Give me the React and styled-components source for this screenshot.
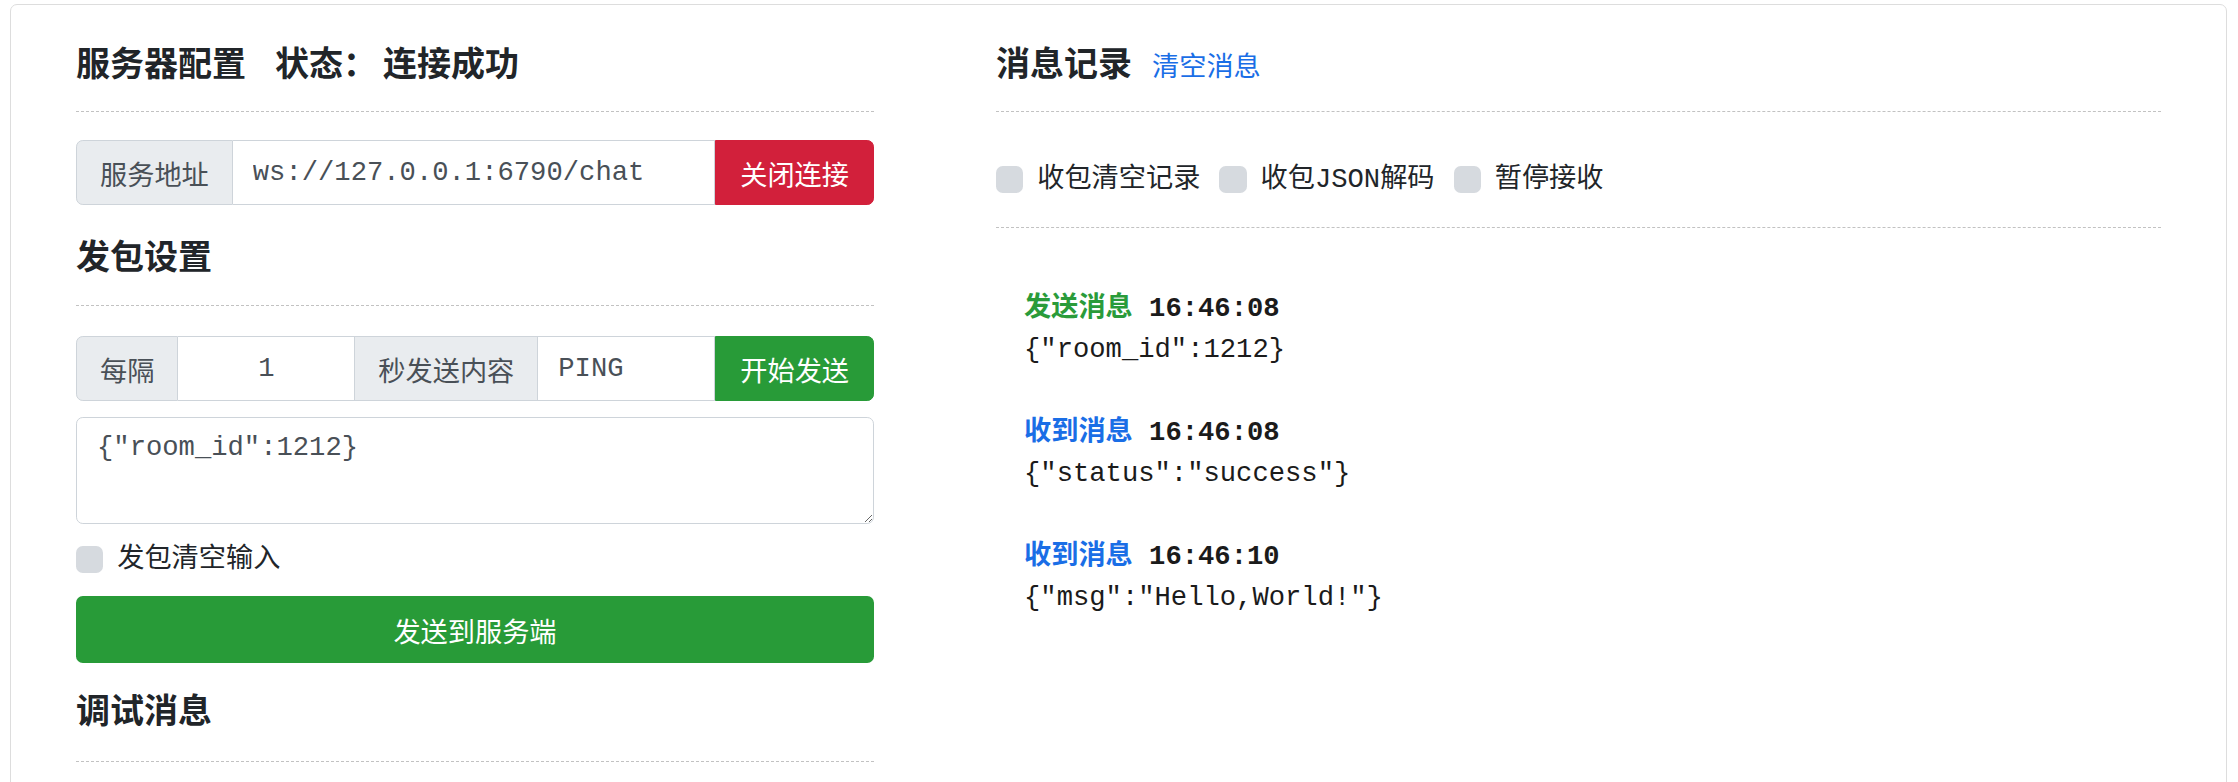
import React from "react";
import styled, { createGlobalStyle } from "styled-components";

const GlobalStyle = createGlobalStyle`
  html, body {
    margin: 0;
    padding: 0;
    background: #fff;
    overflow: hidden;
  }
  body {
    font-family: "Liberation Mono", "Noto Sans CJK SC", monospace;
    color: #212529;
  }
`;

const Card = styled.div`
  margin: 4px 11px 0 10px;
  min-height: 860px;
  border: 1.7px solid #dddddd;
  border-radius: 7px;
  padding: 36px 63px 0 65px;
  box-sizing: border-box;
`;

const Columns = styled.div`
  display: grid;
  grid-template-columns: 798px 1165px;
  column-gap: 122px;
  align-items: start;
`;

const Column = styled.div`
  display: flex;
  flex-direction: column;
`;

const Title = styled.h5`
  display: flex;
  align-items: baseline;
  height: 41px;
  margin: ${(p) => (p.$first ? "0" : `${p.$top || 29}px 0 0`)};
  font-family: "Noto Sans CJK SC", sans-serif;
  font-size: 34px;
  line-height: 41px;
  font-weight: 700;
  color: #212529;
  white-space: pre;
`;

const Status = styled.span`
  margin-left: 29px;
`;

const StatusValue = styled.span`
  margin-left: 6px;
`;

const TitleLink = styled.a`
  margin-left: 20px;
  font-size: 27.2px;
  font-weight: 400;
  color: #1a6ee6;
  text-decoration: none;
  cursor: pointer;
`;

const Divider = styled.hr`
  margin: ${(p) => p.$top || 29}px 0 0;
  border: 0;
  border-top: 1.7px dashed #c2c2c2;
`;

const InputGroup = styled.div`
  display: flex;
  height: 65px;
  margin-top: ${(p) => p.$top || 0}px;
`;

const Addon = styled.span`
  display: flex;
  align-items: center;
  padding: 0 23px;
  background: #e9ecef;
  border: 1.7px solid #ced4da;
  border-left-width: ${(p) => (p.$first ? "1.7px" : "0")};
  border-radius: ${(p) => (p.$first ? "6.8px 0 0 6.8px" : "0")};
  font-family: "Noto Sans CJK SC", sans-serif;
  font-size: 27.2px;
  color: #495057;
  white-space: nowrap;
`;

const Field = styled.input`
  flex: 1;
  min-width: 0;
  padding: 0 20px;
  border: 1.7px solid #ced4da;
  border-left-width: 0;
  font-family: "Liberation Mono", monospace;
  font-size: 27.2px;
  color: #495057;
  text-align: ${(p) => (p.$center ? "center" : "left")};
  outline: none;
  background: #fff;
`;

const GroupButton = styled.button`
  padding: 0 24px;
  border: 1.7px solid ${(p) => p.$color};
  background: ${(p) => p.$color};
  color: #fff;
  border-radius: 0 6.8px 6.8px 0;
  font-family: "Noto Sans CJK SC", sans-serif;
  font-size: 27.2px;
  white-space: nowrap;
  cursor: pointer;
`;

const TextArea = styled.textarea`
  margin-top: 16px;
  height: 107px;
  box-sizing: border-box;
  padding: 10px 20px;
  border: 1.7px solid #ced4da;
  border-radius: 6.8px;
  font-family: "Liberation Mono", monospace;
  font-size: 27.2px;
  line-height: 40.8px;
  color: #495057;
  outline: none;
  resize: vertical;
`;

const CheckRow = styled.div`
  display: flex;
  align-items: center;
  height: 41px;
  margin-top: ${(p) => p.$top || 0}px;
`;

const CheckLabel = styled.label`
  display: flex;
  align-items: center;
  gap: 14px;
  margin-right: 19px;
  font-size: 27.2px;
  line-height: 41px;
  color: #212529;
  cursor: pointer;
`;

const Box = styled.input.attrs({ type: "checkbox" })`
  appearance: none;
  margin: 0;
  width: 27.2px;
  height: 27.2px;
  border-radius: 6.8px;
  background: #d6dadf;
`;

const BlockButton = styled.button`
  margin-top: 16px;
  height: 67px;
  border: 0;
  border-radius: 6.8px;
  background: #289b38;
  color: #fff;
  font-family: "Noto Sans CJK SC", sans-serif;
  font-size: 27.2px;
  cursor: pointer;
`;

const MessageList = styled.div`
  display: flex;
  flex-direction: column;
  gap: 38px;
  margin-top: 56px;
  padding-left: 28px;
`;

const Message = styled.div`
  font-size: 27.2px;
  line-height: 41px;
  color: #1b1b1b;
`;

const Line = styled.div`
  height: 41px;
  margin-top: ${(p) => (p.$bold ? 0 : 4)}px;
  white-space: pre;
  font-weight: ${(p) => (p.$bold ? 700 : 400)};
`;

const Kind = styled.span`
  font-family: "Noto Sans CJK SC", sans-serif;
  color: ${(p) => (p.$sent ? "#2a9b3a" : "#1a6ee6")};
`;

const messages = [
  { sent: true, time: "16:46:08", body: '{"room_id":1212}' },
  { sent: false, time: "16:46:08", body: '{"status":"success"}' },
  { sent: false, time: "16:46:10", body: '{"msg":"Hello,World!"}' },
];

export default function App() {
  return (
    <>
      <GlobalStyle />
      <Card>
        <Columns>
          <Column>
            <Title $first>
              服务器配置
              <Status>
                状态：<StatusValue>连接成功</StatusValue>
              </Status>
            </Title>
            <Divider />
            <InputGroup $top={28}>
              <Addon $first>服务地址</Addon>
              <Field defaultValue="ws://127.0.0.1:6790/chat" />
              <GroupButton $color="#d2203b">关闭连接</GroupButton>
            </InputGroup>

            <Title>发包设置</Title>
            <Divider $top={30} />
            <InputGroup $top={30}>
              <Addon $first>每隔</Addon>
              <Field $center defaultValue="1" />
              <Addon>秒发送内容</Addon>
              <Field defaultValue="PING" />
              <GroupButton $color="#289b38">开始发送</GroupButton>
            </InputGroup>
            <TextArea defaultValue={'{"room_id":1212}'} />
            <CheckRow $top={15}>
              <CheckLabel>
                <Box />
                发包清空输入
              </CheckLabel>
            </CheckRow>
            <BlockButton>发送到服务端</BlockButton>

            <Title $top={25}>调试消息</Title>
            <Divider $top={32} />
          </Column>

          <Column>
            <Title $first>
              消息记录
              <TitleLink>清空消息</TitleLink>
            </Title>
            <Divider />
            <CheckRow $top={47}>
              <CheckLabel>
                <Box />
                收包清空记录
              </CheckLabel>
              <CheckLabel>
                <Box />
                收包JSON解码
              </CheckLabel>
              <CheckLabel>
                <Box />
                暂停接收
              </CheckLabel>
            </CheckRow>
            <Divider $top={27} />
            <MessageList>
              {messages.map((m, i) => (
                <Message key={i}>
                  <Line $bold>
                    <Kind $sent={m.sent}>{m.sent ? "发送消息" : "收到消息"}</Kind> {m.time}
                  </Line>
                  <Line>{m.body}</Line>
                </Message>
              ))}
            </MessageList>
          </Column>
        </Columns>
      </Card>
    </>
  );
}
